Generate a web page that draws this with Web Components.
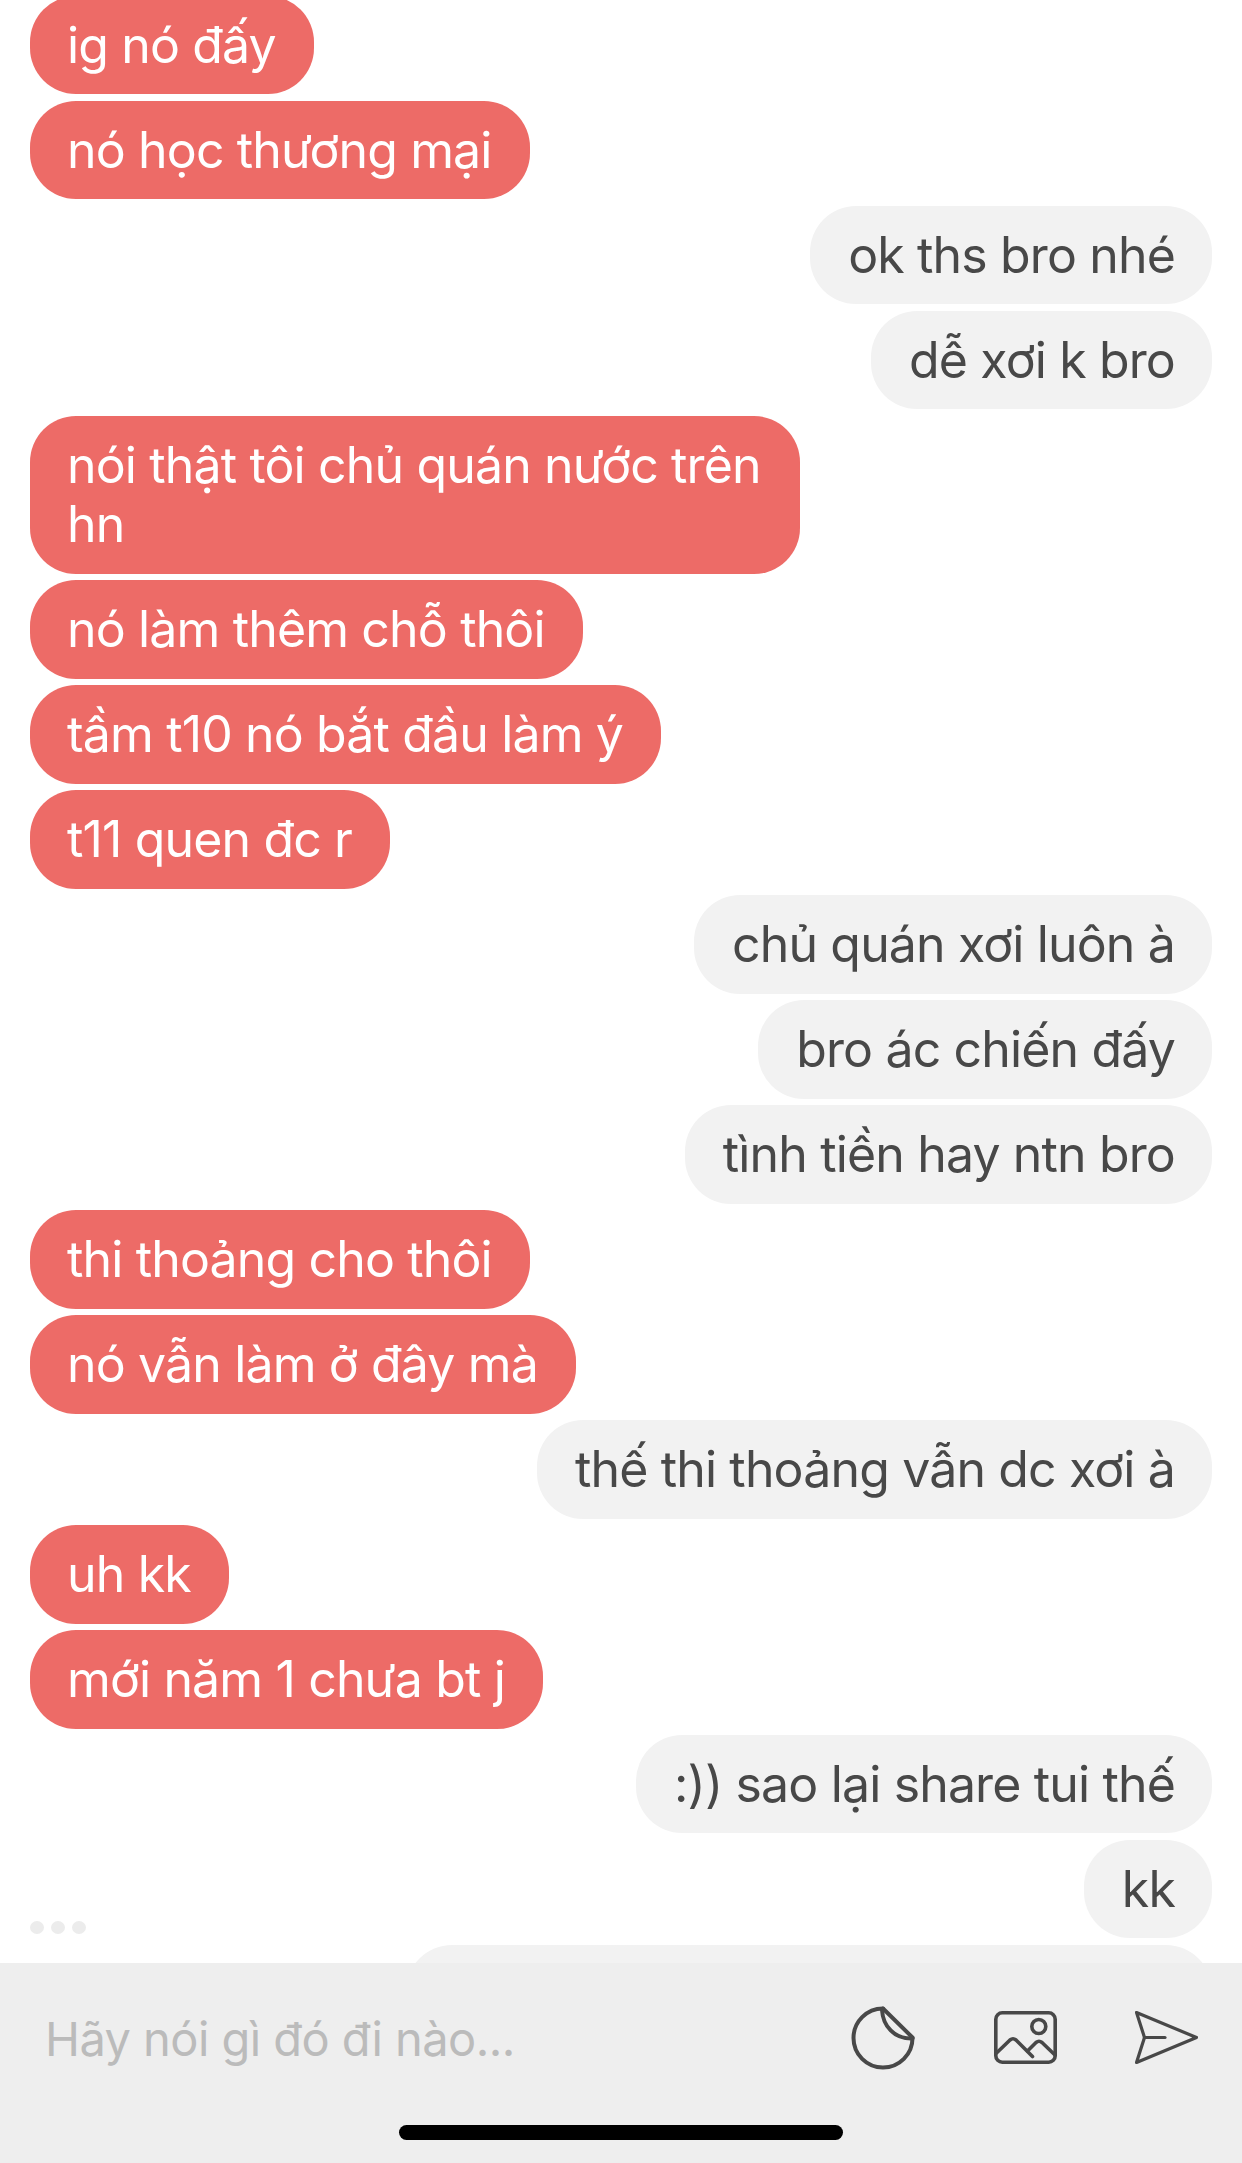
<!DOCTYPE html>
<html lang="vi">
<head>
<meta charset="utf-8">
<title>Chat</title>
<style>
html,body{margin:0;padding:0;background:#fff}
body{width:1242px;height:2163px;overflow:hidden;font-family:"Inter","Noto Sans",sans-serif}
</style>
</head>
<body>
<chat-screen>
  <chat-bubble from="them">ig nó đấy</chat-bubble>
  <chat-bubble from="them">nó học thương mại</chat-bubble>
  <chat-bubble from="me">ok ths bro nhé</chat-bubble>
  <chat-bubble from="me">dễ xơi k bro</chat-bubble>
  <chat-bubble from="them">nói thật tôi chủ quán nước trên hn</chat-bubble>
  <chat-bubble from="them">nó làm thêm chỗ thôi</chat-bubble>
  <chat-bubble from="them">tầm t10 nó bắt đầu làm ý</chat-bubble>
  <chat-bubble from="them">t11 quen đc r</chat-bubble>
  <chat-bubble from="me">chủ quán xơi luôn à</chat-bubble>
  <chat-bubble from="me">bro ác chiến đấy</chat-bubble>
  <chat-bubble from="me">tình tiền hay ntn bro</chat-bubble>
  <chat-bubble from="them">thi thoảng cho thôi</chat-bubble>
  <chat-bubble from="them">nó vẫn làm ở đây mà</chat-bubble>
  <chat-bubble from="me">thế thi thoảng vẫn dc xơi à</chat-bubble>
  <chat-bubble from="them">uh kk</chat-bubble>
  <chat-bubble from="them">mới năm 1 chưa bt j</chat-bubble>
  <chat-bubble from="me">:)) sao lại share tui thế</chat-bubble>
  <chat-bubble from="me">kk</chat-bubble>
  <chat-bubble from="me" style="--bubble-width:806px">&nbsp;</chat-bubble>
  <typing-dots slot="overlay"></typing-dots>
  <chat-composer slot="composer" placeholder="Hãy nói gì đó đi nào..."></chat-composer>
</chat-screen>

<script>
class ChatScreen extends HTMLElement{
  constructor(){super();this.attachShadow({mode:'open'}).innerHTML=`
  <style>
    :host{display:flex;flex-direction:column;position:relative;width:1242px;height:2163px;overflow:hidden;background:#fff}
    .list{flex:1;min-height:0;overflow:hidden;display:flex;flex-direction:column;gap:6.400px;padding:0 30px;margin-top:-4.300px}
    .foot{flex:none}
  </style>
  <div class="list"><slot></slot></div>
  <slot name="overlay"></slot>
  <div class="foot"><slot name="composer"></slot></div>`;}
}
class ChatBubble extends HTMLElement{
  constructor(){super();this.attachShadow({mode:'open'}).innerHTML=`
  <style>
    :host{display:block;flex:none;box-sizing:border-box;align-self:flex-start;max-width:770px;width:var(--bubble-width,auto);
      padding:20.200px 38px 18.700px 37px;border-radius:46px;font:400 50px/59.700px "Inter","Noto Sans",sans-serif;letter-spacing:-.85px;
      background:#ed6b67;color:#fff}
    :host([from="me"]){align-self:flex-end;max-width:none;padding:20.200px 37px 18.700px 38px;background:#f2f2f2;color:#484848}
  </style><slot></slot>`;}
}
class TypingDots extends HTMLElement{
  constructor(){super();this.attachShadow({mode:'open'}).innerHTML=`
  <style>
    :host{position:absolute;left:30px;top:1921px;display:flex;gap:7px}
    i{width:14px;height:13px;border-radius:50%;background:#ececec}
  </style><i></i><i></i><i></i>`;}
}
class IconSticker extends HTMLElement{
  constructor(){super();this.attachShadow({mode:'open'}).innerHTML=`
  <style>:host{display:block;width:64px;height:64px}svg{display:block}</style>
  <svg width="64" height="64" viewBox="0 0 64 64" fill="none" stroke="#484848" stroke-width="4" stroke-linecap="round" stroke-linejoin="round">
    <path d="M32 2.500A29.500 29.500 0 1 0 61.500 32"/>
    <path d="M32 2.500L61.500 31.500"/>
    <path d="M31 4C32 20 43 33 61.500 32.500"/>
  </svg>`;}
}
class IconImage extends HTMLElement{
  constructor(){super();this.attachShadow({mode:'open'}).innerHTML=`
  <style>:host{display:block;width:63px;height:53px}svg{display:block}</style>
  <svg width="63" height="53" viewBox="0 0 63 53" fill="none" stroke="#484848" stroke-width="3.600" stroke-linecap="round" stroke-linejoin="round">
    <rect x="1.800" y="1.800" width="59.400" height="49.400" rx="6.500"/>
    <circle cx="44.800" cy="15.500" r="7"/>
    <path d="M2.500 42L16 29Q19 26.500 22 29L38.500 45.500"/>
    <path d="M33.500 40L42 31.500Q45 29 48 31.500L61 44"/>
  </svg>`;}
}
class IconSend extends HTMLElement{
  constructor(){super();this.attachShadow({mode:'open'}).innerHTML=`
  <style>:host{display:block;width:63px;height:53px}svg{display:block}</style>
  <svg width="63" height="53" viewBox="0 0 63 53" fill="none" stroke="#484848" stroke-width="3.200" stroke-linecap="round" stroke-linejoin="round">
    <path d="M1.500 1.500L61.500 26.500L1.500 51.500L9.500 26.500Z"/>
    <path d="M9.500 26.500H30"/>
  </svg>`;}
}
class ChatComposer extends HTMLElement{
  constructor(){super();this.attachShadow({mode:'open'}).innerHTML=`
  <style>
    :host{display:block;height:200px;background:#eee;box-sizing:border-box}
    .row{height:149px;display:flex;align-items:center;padding:0 44px 0 45px;box-sizing:border-box}
    .ph{flex:1;padding-top:3px;font:400 47px/60px "Inter","Noto Sans",sans-serif;letter-spacing:-.55px;color:#bbb;white-space:nowrap}
    .icons{display:flex;align-items:center;gap:78.500px}
    .home{width:444px;height:15px;margin:13px auto 0;border-radius:8px;background:#000}
  </style>
  <div class="row">
    <div class="ph"></div>
    <div class="icons"><icon-sticker></icon-sticker><icon-image></icon-image><icon-send></icon-send></div>
  </div>
  <div class="home"></div>`;
  this.shadowRoot.querySelector('.ph').textContent=this.getAttribute('placeholder')||'';}
}
customElements.define('chat-screen',ChatScreen);
customElements.define('chat-bubble',ChatBubble);
customElements.define('typing-dots',TypingDots);
customElements.define('icon-sticker',IconSticker);
customElements.define('icon-image',IconImage);
customElements.define('icon-send',IconSend);
customElements.define('chat-composer',ChatComposer);
</script>
</body>
</html>
